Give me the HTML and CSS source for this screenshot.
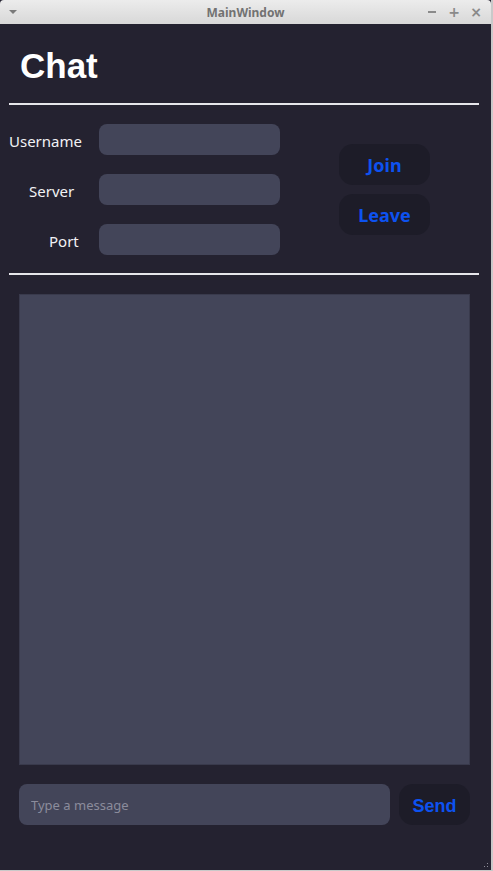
FILE: index.html
```html
<!DOCTYPE html>
<html>
<head>
    <link rel="stylesheet" href="styles.css">
</head>
<body>
    <div class="window">
        <div class="titlebar">
            <span class="menu-arrow"></span>
            <span class="wtitle">MainWindow</span>
            <div class="wbtns">
                <span class="wbtn"><span class="dash"></span></span>
                <span class="wbtn">+</span>
                <span class="wbtn">&#215;</span>
            </div>
        </div>

        <div class="content">
            <div class="logo">Chat</div>
            <div class="line top-line"></div>

            <div class="connect">
                <div class="form">
                    <label class="lbl lbl-user">Username</label>
                    <input class="field" type="text">
                    <label class="lbl lbl-server">Server</label>
                    <input class="field" type="text">
                    <label class="lbl lbl-port">Port</label>
                    <input class="field" type="text">
                </div>
                <div class="actions">
                    <button class="btn">Join</button>
                    <button class="btn">Leave</button>
                </div>
            </div>

            <div class="line"></div>

            <div class="chatlog" id="log"></div>

            <div class="sendrow">
                <input class="msgbox" type="text" placeholder="Type a message">
                <button class="btn send">Send</button>
            </div>
        </div>
        <div class="grip"></div>
    </div>
</body>
</html>
```

FILE: styles.css
```css
body {
    margin: 0;
    padding: 0;
    background-color: #242230;
    font-family: 'Noto Sans', 'Open Sans', sans-serif;
}
.window {
    position: relative;
    width: 491px;
    height: 870px;
    display: flex;
    flex-direction: column;
    background-color: #242230;
    border-right: 2px solid #c9c9c9;
    border-bottom: 1px solid #c9c9c9;
}
.titlebar {
    height: 24px;
    display: flex;
    align-items: center;
    justify-content: center;
    position: relative;
    background: linear-gradient(#ececec, #d8d8d8);
    border-radius: 4px 4px 0 0;
}
.menu-arrow {
    position: absolute;
    left: 9px;
    top: 10px;
    width: 0;
    height: 0;
    border-left: 4px solid transparent;
    border-right: 4px solid transparent;
    border-top: 4px solid #7a7a7a;
}
.wtitle {
    font-family: 'Noto Sans', sans-serif;
    font-size: 12px;
    font-weight: bold;
    color: #727272;
}
.wbtns {
    position: absolute;
    right: 8px;
    top: 3px;
    display: flex;
    gap: 8px;
}
.wbtn {
    width: 14px;
    height: 18px;
    display: flex;
    align-items: center;
    justify-content: center;
    font-family: 'DejaVu Sans', sans-serif;
    font-size: 14px;
    font-weight: bold;
    color: #8a8a8a;
    line-height: 18px;
}
.dash {
    width: 8px;
    height: 2px;
    background-color: #8a8a8a;
}
.content {
    flex: 1;
    display: flex;
    flex-direction: column;
    padding: 0 12px 0 9px;
}
.logo {
    font-family: 'Liberation Sans', Arial, sans-serif;
    font-size: 35px;
    font-weight: bold;
    color: #ffffff;
    margin: 22px 0 0 11px;
    height: 40px;
    line-height: 40px;
}
.line {
    height: 2px;
    background-color: #e6e6ea;
}
.top-line {
    margin-top: 17px;
}
.connect {
    display: flex;
    align-items: center;
    margin: 19px 0 18px 0;
}
.form {
    display: grid;
    grid-template-columns: 90px 181px;
    row-gap: 19px;
    align-items: center;
}
.lbl {
    color: #f2f2f5;
    font-size: 15px;
    padding-top: 3px;
}
.lbl-server {
    padding-left: 20px;
}
.lbl-port {
    padding-left: 40px;
}
.field {
    height: 31px;
    box-sizing: border-box;
    border: none;
    border-radius: 8px;
    background-color: #434559;
    outline: none;
}
.actions {
    margin-left: 59px;
    display: flex;
    flex-direction: column;
    gap: 9px;
}
.btn {
    width: 91px;
    height: 41px;
    border: none;
    border-radius: 14px;
    background-color: #1d1c28;
    color: #0d52f0;
    font-family: 'Noto Sans', sans-serif;
    font-size: 18px;
    font-weight: bold;
    cursor: pointer;
}
.chatlog {
    margin: 19px 9px 0 10px;
    height: 469px;
    background-color: #434559;
    border: 1px solid #393a4c;
}
.sendrow {
    display: flex;
    gap: 9px;
    margin: 19px 9px 0 10px;
}
.msgbox {
    flex: 1;
    height: 41px;
    box-sizing: border-box;
    border: none;
    border-radius: 8px;
    background-color: #434559;
    padding: 0 12px;
    font-family: 'Noto Sans', sans-serif;
    font-size: 13px;
    color: #ffffff;
    outline: none;
}
.msgbox::placeholder {
    color: #8b8c9c;
}
.send {
    width: 71px;
    padding-top: 4px;
    font-family: 'Liberation Sans', Arial, sans-serif;
}
.grip {
    position: absolute;
    right: 1px;
    bottom: 1px;
    width: 10px;
    height: 10px;
    background-image: radial-gradient(#8c8c96 0.8px, transparent 1px);
    background-size: 3px 3px;
    clip-path: polygon(100% 0, 100% 100%, 0 100%);
}
```
